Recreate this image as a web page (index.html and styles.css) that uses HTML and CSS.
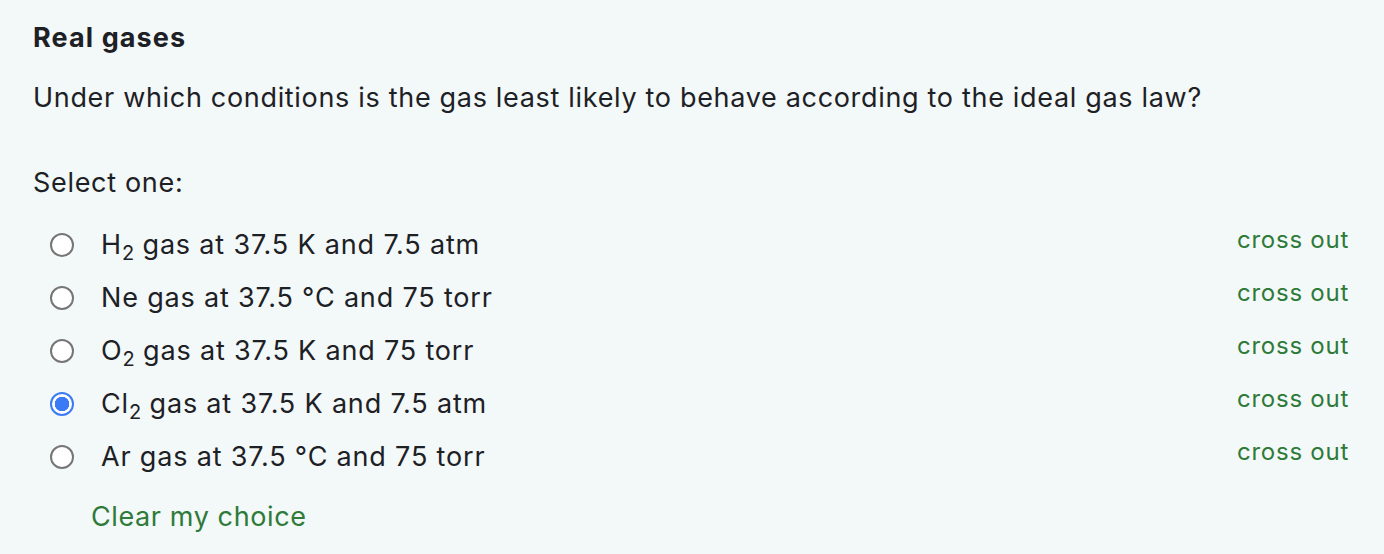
FILE: index.html
```html
<!DOCTYPE html>
<html lang="en">
<head>
  <meta charset="UTF-8">
  <title>Real gases</title>
  <link rel="stylesheet" href="styles.css">
</head>
<body>
  <div class="que">
    <h3 class="qname">Real gases</h3>
    <div class="qtext">Under which conditions is the gas least likely to behave according to the ideal gas law?</div>

    <div class="prompt">Select one:</div>
    <div class="answer">
      <div class="option">
        <input type="radio" name="q1" id="a1">
        <label for="a1">H<sub>2</sub> gas at 37.5 K and 7.5 atm</label>
        <a href="#" class="crossout">cross out</a>
      </div>
      <div class="option">
        <input type="radio" name="q1" id="a2">
        <label for="a2">Ne gas at 37.5 &deg;C and 75 torr</label>
        <a href="#" class="crossout">cross out</a>
      </div>
      <div class="option">
        <input type="radio" name="q1" id="a3">
        <label for="a3">O<sub>2</sub> gas at 37.5 K and 75 torr</label>
        <a href="#" class="crossout">cross out</a>
      </div>
      <div class="option">
        <input type="radio" name="q1" id="a4" checked>
        <label for="a4">Cl<sub>2</sub> gas at 37.5 K and 7.5 atm</label>
        <a href="#" class="crossout">cross out</a>
      </div>
      <div class="option">
        <input type="radio" name="q1" id="a5">
        <label for="a5">Ar gas at 37.5 &deg;C and 75 torr</label>
        <a href="#" class="crossout">cross out</a>
      </div>
    </div>
    <a href="#" class="clear">Clear my choice</a>
  </div>
</body>
</html>
```

FILE: styles.css
```css
* { margin: 0; padding: 0; box-sizing: border-box; }
body { background: #f3f8f8; color: #1d2125; font-family: Inter, "Noto Sans", sans-serif; font-size: 27px; line-height: 39px; letter-spacing: 0.68px; }
.que { padding: 18px 35px 0 33px; }
.qname { font-size: 27px; font-weight: 700; letter-spacing: 1.1px; }
.qtext { margin-top: 21px; }
.prompt { margin-top: 46px; }
.answer { margin-top: 16px; }
.option { display: flex; align-items: center; height: 53px; padding-left: 17px; }
.option input { appearance: none; width: 24px; height: 24px; border: 2px solid #767676; border-radius: 50%; background: #fff; margin-right: 27px; flex: none; }
.option input:checked { border-color: #3a7af5; background: radial-gradient(circle, #3a7af5 0 7px, #fff 7.5px); }
.option label { flex: 1; letter-spacing: 0.82px; }
sub { font-size: 20px; line-height: 0; vertical-align: -6px; letter-spacing: 0; }
.crossout { align-self: flex-start; line-height: 43px; font-size: 24px; letter-spacing: 0.75px; color: #2e7a38; text-decoration: none; }
.clear { display: block; margin: 14px 0 0 58px; color: #2e7a38; text-decoration: none; letter-spacing: 0.6px; }
```
